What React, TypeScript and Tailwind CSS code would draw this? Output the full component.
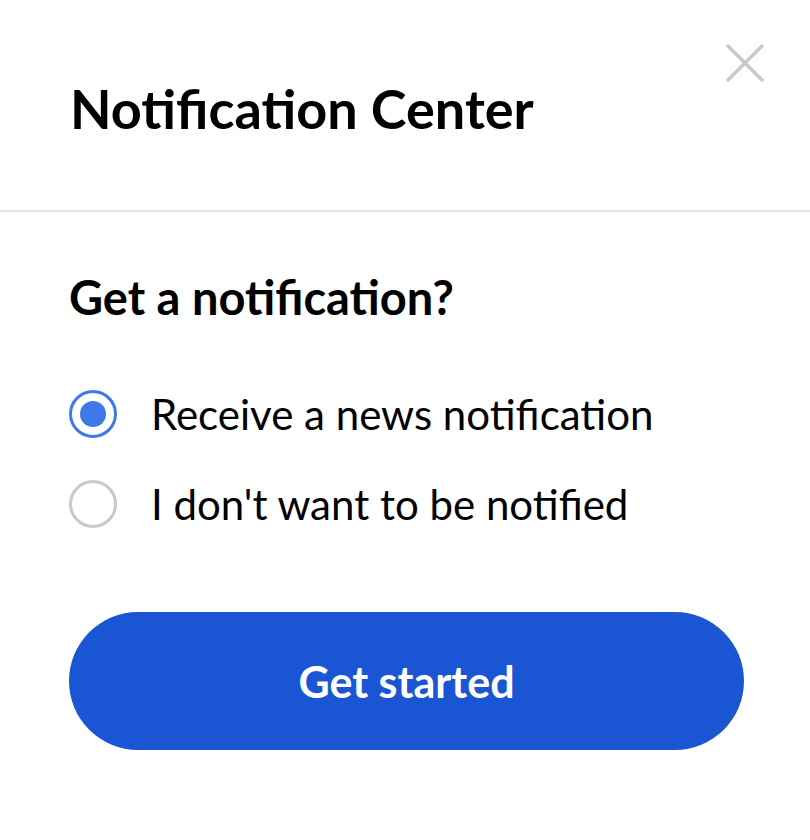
import React, { useState } from "react";

export default function App() {
  const [choice, setChoice] = useState(0);
  const options = ["Receive a news notification", "I don't want to be notified"];
  return (
    <div
      className="w-[810px] h-[840px] bg-white text-black"
      style={{ fontFamily: "Lato, 'Open Sans', sans-serif" }}
    >
      <div className="relative h-[212px] pt-[82px] pl-[70px] border-b-2 border-[#e4e4e4]">
        <h1 className="text-[54px] font-bold leading-none">Notification Center</h1>
        <button className="absolute top-[44px] right-[46px] w-[38px] h-[38px]" aria-label="Close">
          <svg viewBox="0 0 38 38" className="w-[38px] h-[38px]">
            <path d="M2 2 L36 36 M36 2 L2 36" stroke="#c8c8c8" strokeWidth="3.5" strokeLinecap="round" fill="none" />
          </svg>
        </button>
      </div>
      <div className="px-[69px] pt-[62px]">
        <h2 className="text-[47px] font-bold leading-none">Get a notification?</h2>
        <div className="mt-[69px] flex flex-col gap-[42px]">
          {options.map((o, i) => (
            <label key={o} className="flex items-center gap-[34px] cursor-pointer" onClick={() => setChoice(i)}>
              <span
                className={
                  i === choice
                    ? "w-[48px] h-[48px] rounded-full border-[3px] border-[#3f78e8] flex items-center justify-center"
                    : "w-[48px] h-[48px] rounded-full border-[3px] border-[#c9c9c9] flex items-center justify-center"
                }
              >
                {i === choice && <span className="w-[26px] h-[26px] rounded-full bg-[#3f78e8]" />}
              </span>
              <span className="text-[42px] leading-none">{o}</span>
            </label>
          ))}
        </div>
        <button className="mt-[84px] w-[675px] h-[138px] rounded-full bg-[#1a55d4] text-white text-[43px] leading-none font-bold">
          Get started
        </button>
      </div>
    </div>
  );
}
